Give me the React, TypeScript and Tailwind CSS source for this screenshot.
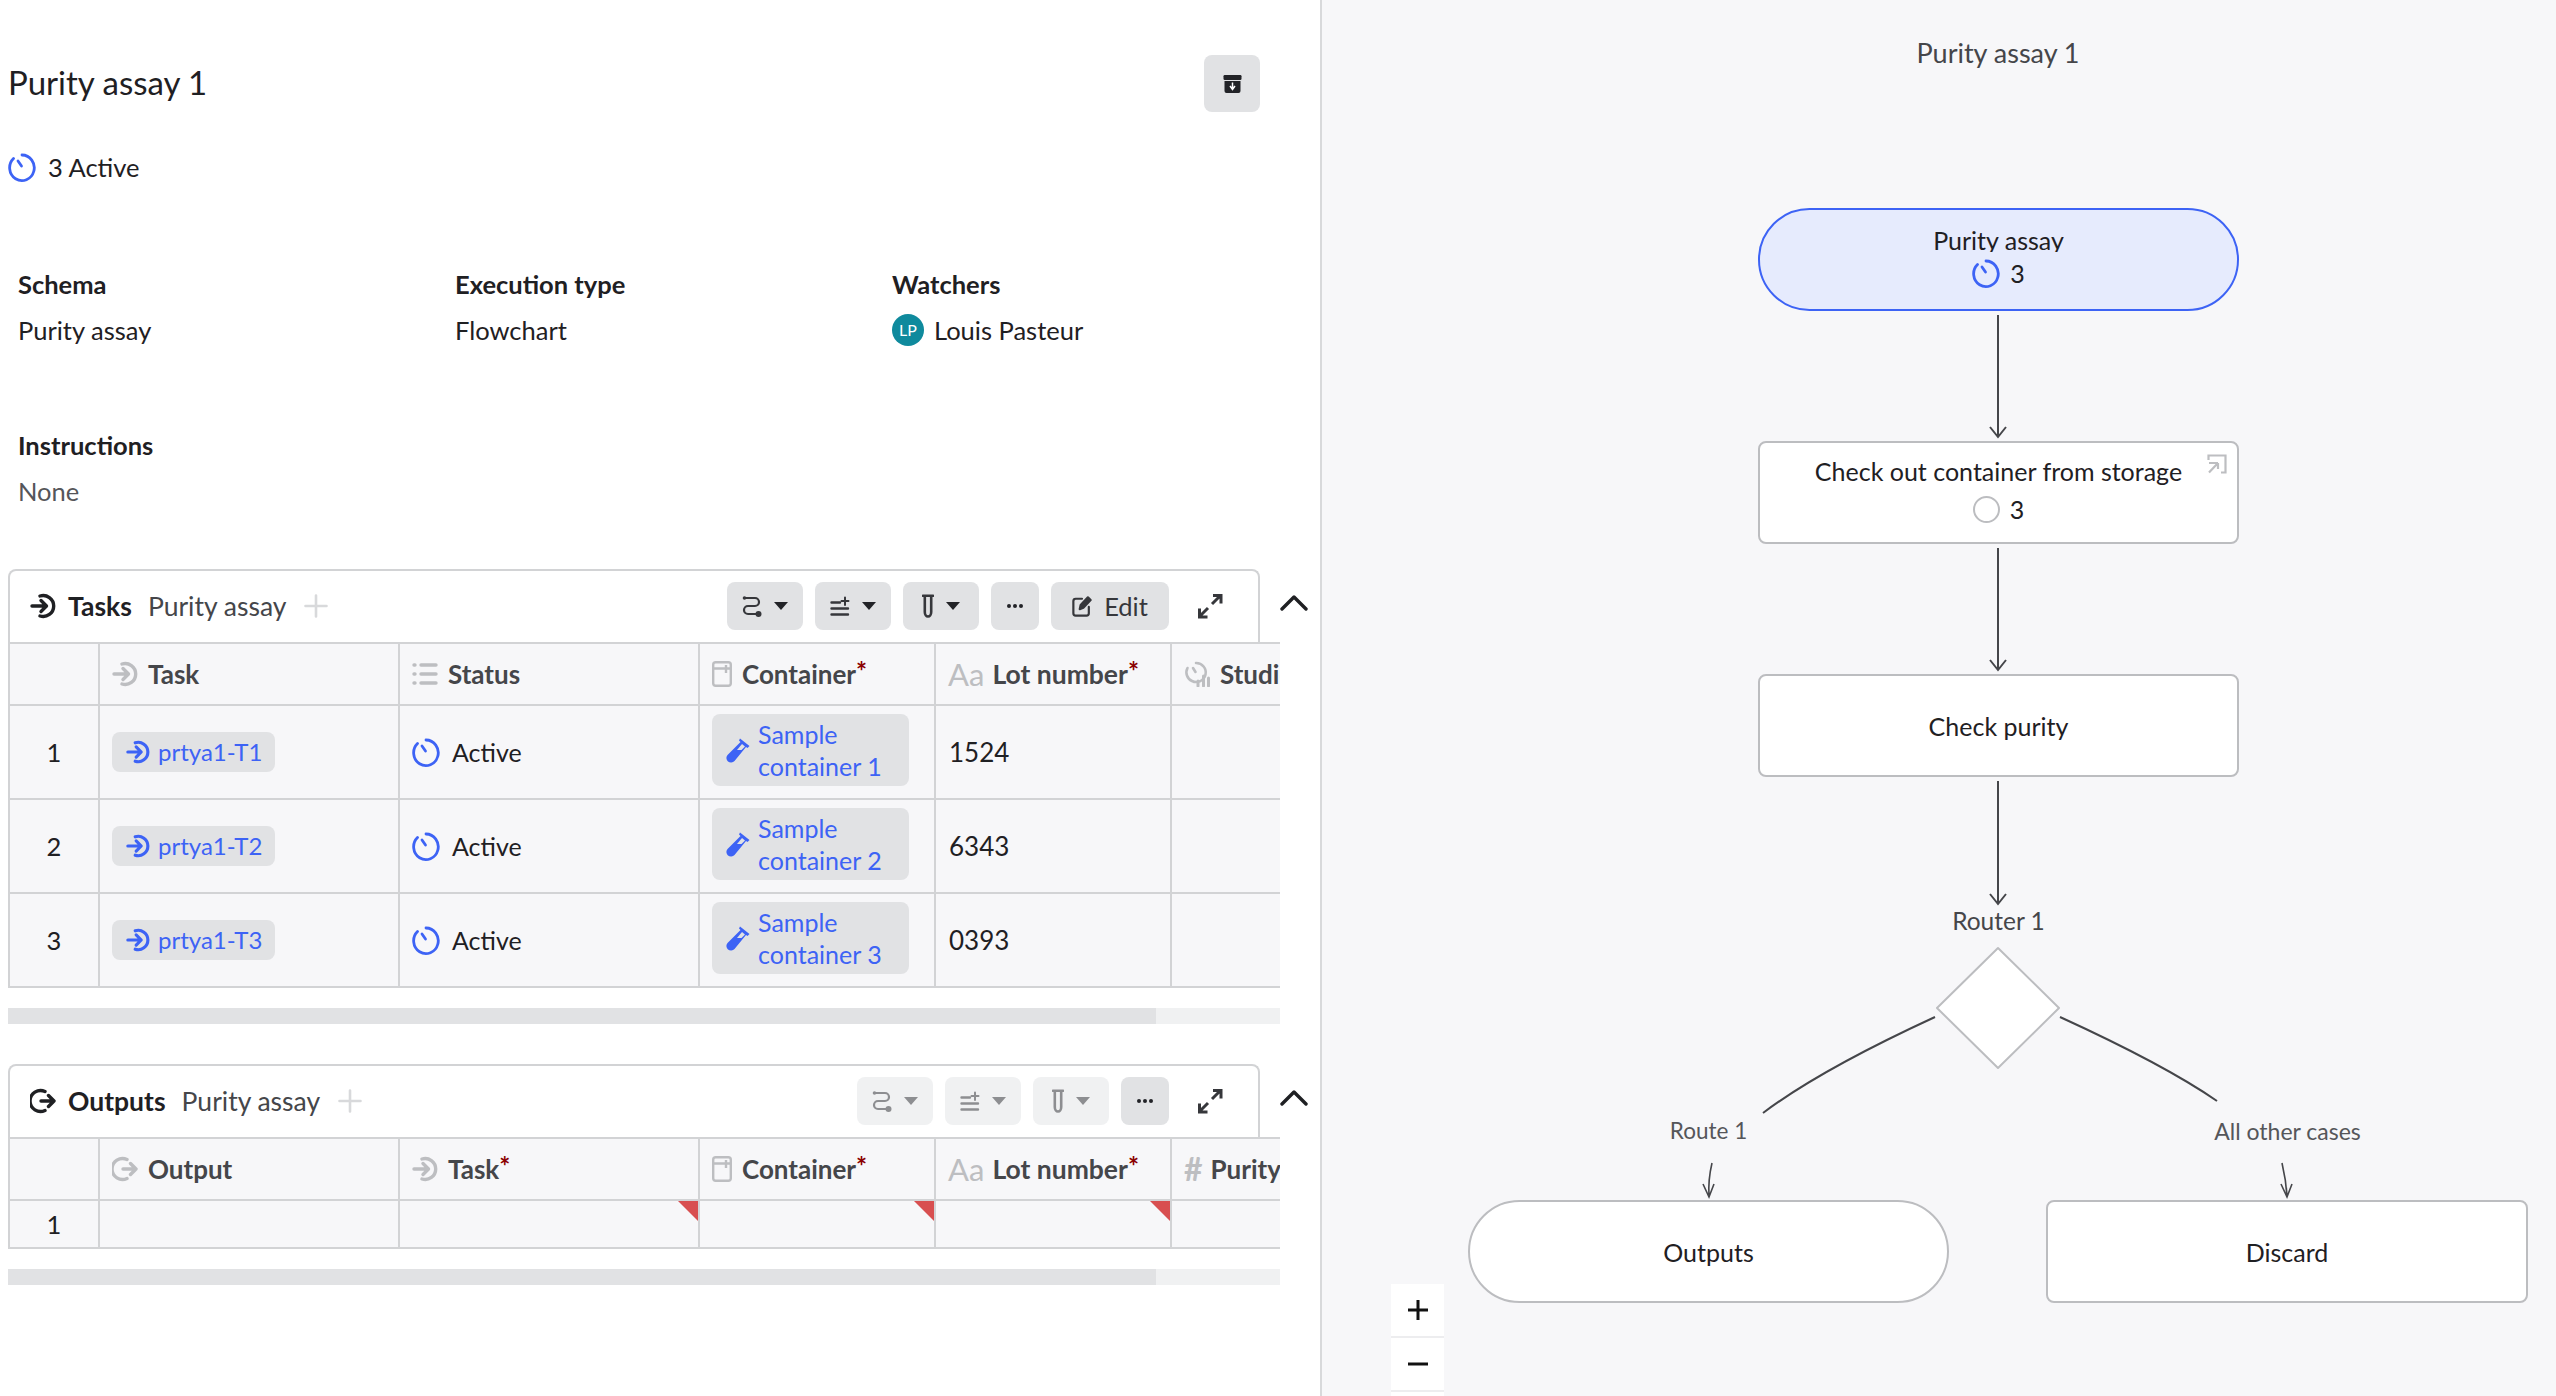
import React from "react";

type IconProps = { className?: string };

// open ring with a hand, used for "active" status
function TimerIcon({ className = "w-[28px] h-[32px] text-[#3d63f5]" }: IconProps) {
  return (
    <svg viewBox="0 0 28 32" fill="none" stroke="currentColor" strokeWidth="2.8" strokeLinecap="round" className={className}>
      <path d="M14 4 A12.3 12.8 0 1 1 5.5 7.5" />
      <path d="M10 10 L13.5 15" />
    </svg>
  );
}

function TaskIcon({ className = "w-[26px] h-[26px] text-[#bdbec1]" }: IconProps) {
  return (
    <svg viewBox="0 0 26 26" fill="none" stroke="currentColor" strokeWidth="3.4" strokeLinecap="round" strokeLinejoin="round" className={className}>
      <path d="M2 13 H16 M11 7.5 L16.5 13 L11 18.5" />
      <path d="M10 3 A10.5 10.5 0 1 1 10 23" />
    </svg>
  );
}

function OutputIcon({ className = "w-[26px] h-[26px] text-[#bdbec1]" }: IconProps) {
  return (
    <svg viewBox="0 0 26 26" fill="none" stroke="currentColor" strokeWidth="3.4" strokeLinecap="round" strokeLinejoin="round" className={className}>
      <path d="M11 13 H24 M18.5 7.5 L24 13 L18.5 18.5" />
      <path d="M15 3.5 A10.5 10.5 0 1 0 15 22.5" />
    </svg>
  );
}

function ListIcon() {
  return (
    <svg viewBox="0 0 26 24" fill="none" stroke="#bdbec1" strokeWidth="3.4" strokeLinecap="round" className="w-[26px] h-[24px]">
      <path d="M2 3 H3 M2 12 H3 M2 21 H3 M9 3 H24 M9 12 H24 M9 21 H24" />
    </svg>
  );
}

function ContainerIcon() {
  return (
    <svg viewBox="0 0 20 26" fill="none" stroke="#bdbec1" strokeWidth="2.4" strokeLinejoin="round" className="w-[20px] h-[26px]">
      <rect x="1.2" y="1.2" width="17.6" height="23.6" rx="2.5" />
      <path d="M1.2 7.5 H18.8 M14 4 V12" />
    </svg>
  );
}

function StudiesIcon() {
  return (
    <svg viewBox="0 0 26 26" fill="none" stroke="#bdbec1" strokeWidth="2.6" strokeLinecap="round" className="w-[26px] h-[26px]">
      <path d="M12 2 A9.5 9.5 0 1 1 8 20 A9.5 9.5 0 0 1 3.5 7" />
      <path d="M9 7 L11.5 11" />
      <path d="M14 25 V20 M19.5 25 V15 M24.5 25 V17" strokeWidth="3" />
    </svg>
  );
}

function RouteIcon() {
  return (
    <svg viewBox="0 0 20 22" fill="none" stroke="currentColor" strokeWidth="2.2" strokeLinecap="round" className="w-[20px] h-[22px]">
      <path d="M3 3 H13 A4 4 0 0 1 13 11 H6 A4 4 0 0 0 6 19 H15" />
      <circle cx="2.5" cy="3" r="1.8" fill="currentColor" stroke="none" />
      <circle cx="16.5" cy="19" r="3" fill="currentColor" stroke="none" />
    </svg>
  );
}

function ListPlusIcon() {
  return (
    <svg viewBox="0 0 20 20" fill="none" stroke="currentColor" strokeWidth="2.4" strokeLinecap="round" className="w-[20px] h-[20px]">
      <path d="M1.5 6.5 H10 M1.5 12.5 H18 M1.5 18.5 H18" />
      <path d="M15 1.5 V9 M11.5 5 H18.5" strokeWidth="2" />
    </svg>
  );
}

function TubeIcon() {
  return (
    <svg viewBox="0 0 12 24" fill="none" stroke="currentColor" strokeWidth="2.6" strokeLinejoin="round" strokeLinecap="round" className="w-[12px] h-[24px]">
      <path d="M1 1.8 H11 M2.8 1.8 V18 A3.2 4.5 0 0 0 9.2 18 V1.8" />
    </svg>
  );
}

function Caret({ className = "border-t-[#222327]" }: IconProps) {
  return <span className={`w-0 h-0 border-x-[7px] border-x-transparent border-t-[8px] ${className}`} />;
}

function EditIcon() {
  return (
    <svg viewBox="0 0 22 24" fill="none" stroke="#36373b" strokeWidth="2.4" strokeLinecap="round" strokeLinejoin="round" className="w-[20px] h-[22px]">
      <path d="M11 4 H4 A2.5 2.5 0 0 0 1.5 6.5 V20 A2.5 2.5 0 0 0 4 22.5 H16 A2.5 2.5 0 0 0 18.5 20 V13" />
      <path d="M8.5 15.5 L9.5 11 L17.5 2.5 L20.5 5.5 L12.5 14 Z" fill="#36373b" />
    </svg>
  );
}

function ExpandIcon() {
  return (
    <svg viewBox="0 0 26 26" fill="none" stroke="#36373b" strokeWidth="3" className="w-[26px] h-[26px]">
      <path d="M15 11 L23 3 M16 2.5 H24 V10.5 M11 15 L3 23 M2.5 15.5 V24 H10.5" />
    </svg>
  );
}

function ChevronUp() {
  return (
    <svg viewBox="0 0 28 16" fill="none" stroke="#1f2023" strokeWidth="3.4" strokeLinecap="round" strokeLinejoin="round" className="w-[28px] h-[16px]">
      <path d="M2 14 L14 2 L26 14" />
    </svg>
  );
}

function ArchiveIcon() {
  return (
    <svg viewBox="0 0 18 18" className="w-[19px] h-[18px]">
      <rect x="0" y="0" width="18" height="5" rx="1.2" fill="#222327" />
      <path d="M1 6 H17 V16 A2 2 0 0 1 15 18 H3 A2 2 0 0 1 1 16 Z" fill="#222327" />
      <path d="M9 7.5 V14 M6.5 11 L9 14.5 L11.5 11" stroke="#fff" strokeWidth="1.5" fill="none" />
    </svg>
  );
}

function SampleTubeIcon() {
  return (
    <svg viewBox="0 0 24 26" className="w-[24px] h-[26px]">
      <path d="M14 1.5 L23.5 9 L21.5 11 L20 10 L8.5 24 A4.5 4.5 0 0 1 1.5 18 L14.5 5 L13 3.5 Z" fill="#3d63f5" />
      <path d="M16 7 L19 9.5 L15.5 13 L11 13 Z" fill="#e1e2e4" />
    </svg>
  );
}

function CornerLinkIcon() {
  return (
    <svg viewBox="0 0 20 20" fill="none" stroke="#bdbec1" strokeWidth="2.2" className="w-[20px] h-[20px]">
      <path d="M1.5 6 V1.5 H18.5 V18.5 H14" />
      <path d="M11 9 H2 M11 9 V15 M11 9 L2 18.5" />
    </svg>
  );
}

function RedCorner() {
  return (
    <svg viewBox="0 0 20 20" className="absolute top-0 right-0 w-[20px] h-[20px]">
      <path d="M0 0 H20 V20 Z" fill="#d84f50" />
    </svg>
  );
}

function Required() {
  return <span className="text-[#8b0000] font-bold relative -top-[3px] text-[26px] leading-none">*</span>;
}

function HeadCell({ width, icon, label, required }: { width: string; icon: React.ReactNode; label: string; required?: boolean }) {
  return (
    <div className={`${width} shrink-0 h-full border-r-2 border-[#d2d3d5] flex items-center gap-[10px] pl-[12px] overflow-hidden`}>
      <span className="shrink-0 flex items-center">{icon}</span>
      <span className="font-bold text-[#45464a] whitespace-nowrap text-[26px]">
        {label}
        {required && <Required />}
      </span>
    </div>
  );
}

const COL = ["w-[92px]", "w-[300px]", "w-[300px]", "w-[236px]", "w-[236px]", "w-[236px]"];

function TaskRow({ n }: { n: number }) {
  const lots = ["1524", "6343", "0393"];
  return (
    <div className="flex h-[94px] w-[1500px] border-b-2 border-[#d2d3d5] bg-[#f7f7f9]">
      <div className={`${COL[0]} shrink-0 border-x-2 border-[#d2d3d5] flex items-center justify-center text-[#1f2023]`}>{n}</div>
      <div className={`${COL[1]} shrink-0 border-r-2 border-[#d2d3d5] pl-[12px] pt-[26px]`}>
        <div className="w-[163px] h-[40px] rounded-[8px] bg-[#e1e2e4] flex items-center pl-[14px] gap-[8px] text-[#3d63f5] text-[24px]">
          <TaskIcon className="w-[24px] h-[24px] text-[#3d63f5]" />
          <span>prtya1-T{n}</span>
        </div>
      </div>
      <div className={`${COL[2]} shrink-0 border-r-2 border-[#d2d3d5] pl-[12px] flex items-center gap-[12px] text-[#1f2023]`}>
        <TimerIcon />
        <span className="text-[25px]">Active</span>
      </div>
      <div className={`${COL[3]} shrink-0 border-r-2 border-[#d2d3d5] pl-[12px] pt-[8px]`}>
        <div className="w-[197px] h-[72px] rounded-[8px] bg-[#e1e2e4] flex items-center pl-[14px] gap-[8px] text-[#3d63f5] text-[25px] leading-[32px]">
          <SampleTubeIcon />
          <span className="whitespace-nowrap">
            Sample
            <br />
            container {n}
          </span>
        </div>
      </div>
      <div className={`${COL[4]} shrink-0 border-r-2 border-[#d2d3d5] pl-[13px] flex items-center text-[#1f2023] text-[26px]`}>{lots[n - 1]}</div>
      <div className={`${COL[5]} shrink-0 border-r-2 border-[#d2d3d5]`} />
    </div>
  );
}

function Scrollbar() {
  return (
    <div className="w-[1272px] h-[16px] bg-[#f0f1f2] mt-[20px]">
      <div className="w-[1148px] h-full bg-[#e1e2e4]" />
    </div>
  );
}

function ToolButton({ children, faded }: { children: React.ReactNode; faded?: boolean }) {
  return (
    <div
      className={`w-[76px] h-[48px] rounded-[8px] flex items-center justify-center gap-[12px] ${
        faded ? "bg-[#f0f1f2] text-[#8d8e91]" : "bg-[#e1e2e4] text-[#36373b]"
      }`}
    >
      {children}
    </div>
  );
}

function MoreButton() {
  return (
    <div className="w-[48px] h-[48px] rounded-[8px] bg-[#e1e2e4] flex items-center justify-center gap-[2px]">
      <span className="w-[4px] h-[4px] rounded-full bg-[#222327]" />
      <span className="w-[4px] h-[4px] rounded-full bg-[#222327]" />
      <span className="w-[4px] h-[4px] rounded-full bg-[#222327]" />
    </div>
  );
}

function CardHeader({ icon, title, faded, edit }: { icon: React.ReactNode; title: string; faded?: boolean; edit?: boolean }) {
  const caret = faded ? "border-t-[#8d8e91]" : "border-t-[#222327]";
  return (
    <div className="flex items-start">
      <div className="w-[1252px] h-[73px] border-x-2 border-t-2 border-[#d2d3d5] rounded-t-[8px] flex items-center pl-[20px] pb-[1px]">
        <span className="text-[#1f2023] w-[26px] h-[26px] mr-[12px]">{icon}</span>
        <span className="font-bold text-[#1f2023] mr-[16px] text-[26.5px]">{title}</span>
        <span className="text-[#45464a] text-[26.5px]">Purity assay</span>
        <svg viewBox="0 0 24 24" stroke="#d8d9db" strokeWidth="2.6" strokeLinecap="round" className="w-[24px] h-[24px] ml-[18px]">
          <path d="M12 1.5 V22.5 M1.5 12 H22.5" />
        </svg>
        <div className="ml-auto flex items-center gap-[12px]">
          <ToolButton faded={faded}>
            <RouteIcon />
            <Caret className={caret} />
          </ToolButton>
          <ToolButton faded={faded}>
            <ListPlusIcon />
            <Caret className={caret} />
          </ToolButton>
          <ToolButton faded={faded}>
            <TubeIcon />
            <Caret className={caret} />
          </ToolButton>
          <MoreButton />
          {edit && (
            <div className="w-[118px] h-[48px] rounded-[8px] bg-[#e1e2e4] flex items-center justify-center gap-[12px] text-[#36373b]">
              <EditIcon />
              <span>Edit</span>
            </div>
          )}
        </div>
        <span className="ml-[28px] mr-[35px]">
          <ExpandIcon />
        </span>
      </div>
      <span className="ml-[20px] mt-[26px]">
        <ChevronUp />
      </span>
    </div>
  );
}

function LotHead() {
  return (
    <div className={`${COL[4]} shrink-0 h-full border-r-2 border-[#d2d3d5] flex items-center gap-[8px] pl-[12px]`}>
      <span className="text-[#bdbec1] text-[31px] leading-none">Aa</span>
      <span className="font-bold text-[#45464a] whitespace-nowrap text-[26.5px]">
        Lot number
        <Required />
      </span>
    </div>
  );
}

function TasksCard() {
  return (
    <div className="ml-[8px] mt-[62px]">
      <CardHeader icon={<TaskIcon className="w-[26px] h-[26px] text-[#1f2023]" />} title="Tasks" edit />
      <div className="w-[1272px] overflow-hidden">
        <div className="flex h-[64px] w-[1500px] border-y-2 border-[#d2d3d5] bg-[#f7f7f9]">
          <div className={`${COL[0]} shrink-0 border-x-2 border-[#d2d3d5]`} />
          <HeadCell width={COL[1]} icon={<TaskIcon />} label="Task" />
          <HeadCell width={COL[2]} icon={<ListIcon />} label="Status" />
          <HeadCell width={COL[3]} icon={<ContainerIcon />} label="Container" required />
          <LotHead />
          <HeadCell width={COL[5]} icon={<StudiesIcon />} label="Studies" />
        </div>
        <TaskRow n={1} />
        <TaskRow n={2} />
        <TaskRow n={3} />
      </div>
      <Scrollbar />
    </div>
  );
}

function OutputsCard() {
  return (
    <div className="ml-[8px] mt-[40px]">
      <CardHeader icon={<OutputIcon className="w-[26px] h-[26px] text-[#1f2023]" />} title="Outputs" faded />
      <div className="w-[1272px] overflow-hidden">
        <div className="flex h-[64px] w-[1500px] border-y-2 border-[#d2d3d5] bg-[#f7f7f9]">
          <div className={`${COL[0]} shrink-0 border-x-2 border-[#d2d3d5]`} />
          <HeadCell width={COL[1]} icon={<OutputIcon />} label="Output" />
          <HeadCell width={COL[2]} icon={<TaskIcon />} label="Task" required />
          <HeadCell width={COL[3]} icon={<ContainerIcon />} label="Container" required />
          <LotHead />
          <div className={`${COL[5]} shrink-0 h-full border-r-2 border-[#d2d3d5] flex items-center gap-[8px] pl-[12px]`}>
            <span className="text-[#bdbec1] text-[32px] font-bold leading-none">#</span>
            <span className="font-bold text-[#45464a] whitespace-nowrap text-[26px]">Purity</span>
          </div>
        </div>
        <div className="flex h-[48px] w-[1500px] border-b-2 border-[#d2d3d5] bg-[#f7f7f9]">
          <div className={`${COL[0]} shrink-0 border-x-2 border-[#d2d3d5] flex items-center justify-center text-[#1f2023]`}>1</div>
          <div className={`${COL[1]} shrink-0 border-r-2 border-[#d2d3d5]`} />
          <div className={`${COL[2]} shrink-0 border-r-2 border-[#d2d3d5] relative`}>
            <RedCorner />
          </div>
          <div className={`${COL[3]} shrink-0 border-r-2 border-[#d2d3d5] relative`}>
            <RedCorner />
          </div>
          <div className={`${COL[4]} shrink-0 border-r-2 border-[#d2d3d5] relative`}>
            <RedCorner />
          </div>
          <div className={`${COL[5]} shrink-0 border-r-2 border-[#d2d3d5]`} />
        </div>
      </div>
      <Scrollbar />
    </div>
  );
}

function Flowchart() {
  return (
    <div className="relative flex-1 h-full bg-[#f7f7f9] overflow-hidden text-[#1f2023] text-[25px]">
      <div className="absolute left-[436px] w-[480px] top-[37px] text-center text-[#45464a] text-[27px] leading-[32px]">Purity assay 1</div>

      <svg viewBox="1322 0 1234 1396" fill="none" stroke="#45464a" strokeWidth="2" className="absolute inset-0 w-full h-full">
        <path d="M1998 315 V436 M1990 427 L1998 437 L2006 427" />
        <path d="M1998 548 V669 M1990 660 L1998 670 L2006 660" />
        <path d="M1998 781 V903 M1990 894 L1998 904 L2006 894" />
        <polygon points="1998,948 2059,1008 1998,1068 1937,1008" fill="#fff" stroke="#bcbdc0" strokeLinejoin="round" />
        <path d="M1935 1017 Q1820 1070 1763 1113" />
        <path d="M2060 1017 Q2165 1065 2217 1101" />
        <path d="M1712 1163 Q1708 1180 1709 1196 M1703 1184 L1709 1197 L1714 1184" strokeWidth="1.6" />
        <path d="M2282 1163 Q2286 1180 2287 1196 M2281 1184 L2287 1197 L2292 1184" strokeWidth="1.6" />
      </svg>

      <div className="absolute left-[436px] top-[208px] w-[481px] h-[103px] rounded-[52px] border-2 border-[#3d63f5] bg-[#e6ebfd] flex flex-col items-center pt-[16px]">
        <div className="h-[26px] overflow-hidden leading-[28px]">Purity assay</div>
        <div className="flex items-center gap-[10px] mt-[5px]">
          <TimerIcon />
          <span>3</span>
        </div>
      </div>

      <div className="absolute left-[436px] top-[441px] w-[481px] h-[103px] rounded-[8px] border-2 border-[#bcbdc0] bg-white flex flex-col items-center pt-[12px]">
        <span className="absolute top-[11px] right-[10px]">
          <CornerLinkIcon />
        </span>
        <div className="leading-[32px]">Check out container from storage</div>
        <div className="flex items-center gap-[10px] mt-[6px]">
          <span className="w-[27px] h-[27px] rounded-full border-[2.5px] border-[#bcbdc0]" />
          <span>3</span>
        </div>
      </div>

      <div className="absolute left-[436px] top-[674px] w-[481px] h-[103px] rounded-[8px] border-2 border-[#bcbdc0] bg-white flex items-center justify-center">
        Check purity
      </div>

      <div className="absolute left-[436px] w-[481px] top-[905px] text-center text-[#45464a] text-[24.5px] leading-[32px]">Router 1</div>
      <div className="absolute left-[146px] top-[1115px] w-[481px] text-center text-[#55565a] text-[22.5px] leading-[32px]">Route 1</div>
      <div className="absolute left-[725px] top-[1115px] w-[481px] text-center text-[#55565a] text-[23px] leading-[32px]">All other cases</div>

      <div className="absolute left-[146px] top-[1200px] w-[481px] h-[103px] rounded-[52px] border-2 border-[#bcbdc0] bg-white flex items-center justify-center">
        Outputs
      </div>
      <div className="absolute left-[724px] top-[1200px] w-[482px] h-[103px] rounded-[8px] border-2 border-[#bcbdc0] bg-white flex items-center justify-center">
        Discard
      </div>

      <div className="absolute left-[69px] top-[1284px] w-[53px] flex flex-col gap-[2px] bg-[#ededef]">
        <div className="h-[52px] bg-white flex items-center justify-center">
          <svg viewBox="0 0 20 20" stroke="#111" strokeWidth="3" className="w-[20px] h-[20px]">
            <path d="M10 0 V20 M0 10 H20" />
          </svg>
        </div>
        <div className="h-[52px] bg-white flex items-center justify-center">
          <svg viewBox="0 0 20 20" stroke="#111" strokeWidth="3" className="w-[20px] h-[20px]">
            <path d="M0 10 H20" />
          </svg>
        </div>
        <div className="h-[52px] bg-white" />
      </div>
    </div>
  );
}

export default function App() {
  return (
    <div className="w-[2556px] h-[1396px] flex overflow-hidden bg-white font-['Lato','Liberation_Sans',sans-serif] text-[25.5px] leading-[32px] text-[#1f2023]">
      <div className="w-[1322px] h-full shrink-0 border-r-2 border-[#d8d9db] bg-white">
        {/* Title */}
        <div className="flex items-center justify-between pt-[55px] pl-[8px] pr-[60px]">
          <h1 className="text-[33px] leading-[40px] pb-[3px] text-[#1f2023]">Purity assay 1</h1>
          <div className="w-[56px] h-[57px] rounded-[8px] bg-[#e1e2e4] flex items-center justify-center">
            <ArchiveIcon />
          </div>
        </div>

        <div className="flex items-center gap-[12px] ml-[8px] mt-[41px] h-[28px]">
          <TimerIcon />
          <span>3 Active</span>
        </div>

        {/* Details */}
        <div className="grid grid-cols-[437px_437px_auto] pl-[18px] mt-[87px]">
          <div>
            <div className="font-bold">Schema</div>
            <div className="mt-[14px]">Purity assay</div>
          </div>
          <div>
            <div className="font-bold">Execution type</div>
            <div className="mt-[14px]">Flowchart</div>
          </div>
          <div>
            <div className="font-bold">Watchers</div>
            <div className="mt-[14px] flex items-center gap-[10px]">
              <span className="w-[32px] h-[32px] rounded-full bg-[#0f8a9d] text-white text-[16px] flex items-center justify-center">LP</span>
              <span>Louis Pasteur</span>
            </div>
          </div>
        </div>

        <div className="pl-[18px] mt-[83px]">
          <div className="font-bold">Instructions</div>
          <div className="mt-[14px] text-[#55565a]">None</div>
        </div>

        <TasksCard />
        <OutputsCard />
      </div>
      <Flowchart />
    </div>
  );
}
